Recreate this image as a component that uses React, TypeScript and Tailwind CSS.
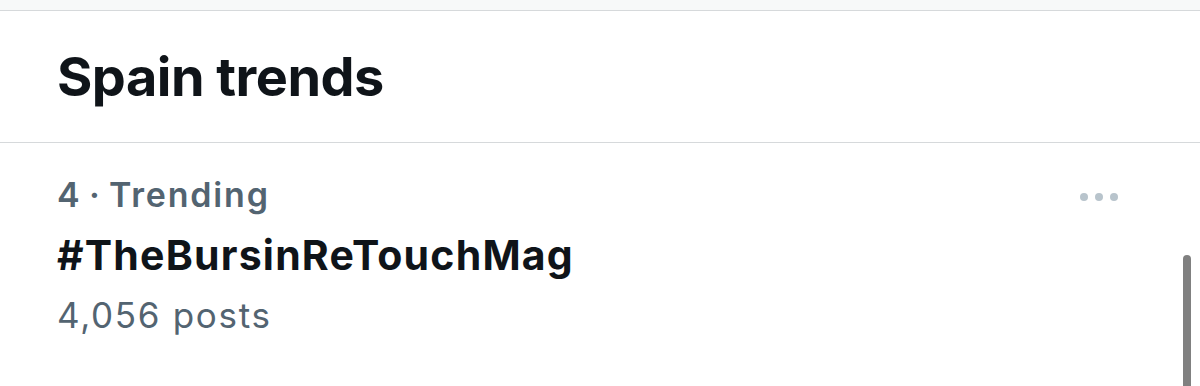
import React from "react";

const font = { fontFamily: "Inter, 'Noto Sans', Arial, sans-serif" };

const MoreDots: React.FC = () => (
  <div className="flex items-center gap-[7px]">
    <span className="w-[8px] h-[8px] rounded-full bg-[#b8c4cc]" />
    <span className="w-[8px] h-[8px] rounded-full bg-[#b8c4cc]" />
    <span className="w-[8px] h-[8px] rounded-full bg-[#b8c4cc]" />
  </div>
);

const App: React.FC = () => (
  <div className="relative w-[1200px] h-[386px] bg-white overflow-hidden" style={font}>
    <div className="h-[10px] bg-[#f7f9f9] border-b border-[#d6d9db] box-content" />
    <div className="h-[132px] flex items-center px-[57px] border-b border-[#d6d9db]">
      <h2 className="text-[54px] leading-none font-bold text-[#0f1419] tracking-[-0.5px]">
        Spain trends
      </h2>
    </div>
    <div className="flex justify-between pl-[57px] pr-[82px] pt-[22px]">
      <div className="flex flex-col">
        <p className="text-[34px] leading-[60px] font-semibold text-[#536471] tracking-[1.8px]">
          4{"\u2009·\u2009"}Trending
        </p>
        <p className="text-[41px] leading-[60px] font-bold text-[#0f1419] tracking-[1.2px]">
          #TheBursinReTouchMag
        </p>
        <p className="text-[35px] leading-[60px] text-[#536471] tracking-[1.7px]">4,056 posts</p>
      </div>
      <div className="mt-[28px]">
        <MoreDots />
      </div>
    </div>
    <div className="absolute left-[1183px] top-[255px] w-[8px] h-[140px] rounded-full bg-[#808080]" />
  </div>
);

export default App;
